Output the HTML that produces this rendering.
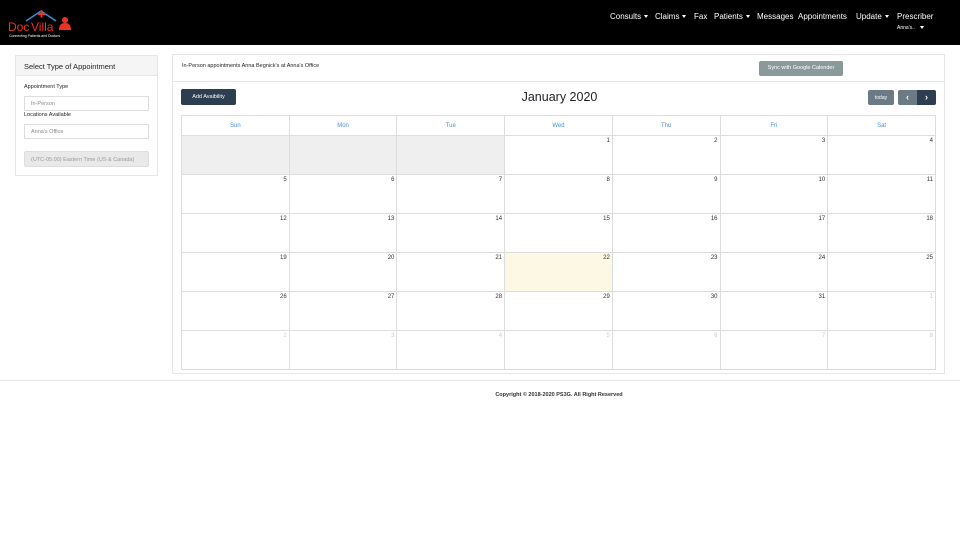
<!DOCTYPE html>
<html><head><meta charset="utf-8"><style>
*{box-sizing:border-box;margin:0;padding:0}
body{width:960px;height:540px;background:#fff;font-family:"Liberation Sans",sans-serif;position:relative;overflow:hidden;color:#212529}
.nav{position:absolute;left:0;top:0;width:960px;height:45px;background:#000}
.nav span{position:absolute;top:12px;color:#fff;font-size:8px}
.car{display:inline-block;border-left:2.5px solid transparent;border-right:2.5px solid transparent;border-top:3px solid #fff;vertical-align:middle;margin-left:3px}
.abs{position:absolute}
.btn{position:absolute;text-align:center;color:#fff;line-height:1}
.card{position:absolute;border:1px solid #e6e6e6;background:#fff}
table{position:absolute;left:181px;top:115px;width:755px;border-collapse:collapse;table-layout:fixed}
td,th{border:1px solid #ddd;font-size:6px;text-align:right;vertical-align:top;padding:2px 2px;height:39px;color:#333;font-weight:normal}
th{height:20px;text-align:center;vertical-align:middle;color:#4a90d9;padding:0}
td.g{background:#efefef}
td.t{background:#fcf8e3}
td.o{color:#ccc}
</style></head><body>
<div class="nav">
 <svg class="abs" style="left:8px;top:7px" width="65" height="32" viewBox="0 0 65 32">
  <path d="M18 14 L33 4 L48 14" fill="none" stroke="#3a8fd6" stroke-width="1.5"/>
  <rect x="30" y="6" width="7" height="2" fill="#e32"/><rect x="32.5" y="3.5" width="2" height="7" fill="#e32"/>
  <circle cx="57" cy="13" r="3" fill="#e32"/><path d="M51 23 Q51 16 57 16 Q63 16 63 23Z" fill="#e32"/>
  <text x="0" y="24" font-family="Liberation Sans" font-size="12" fill="#e32">Doc</text>
  <text x="23" y="24" font-family="Liberation Sans" font-size="12" fill="#e32">Villa</text>
  <text x="1" y="30" font-family="Liberation Sans" font-size="3.5" fill="#fff">Connecting Patients and Doctors</text>
 </svg>
 <span style="left:610px">Consults<i class="car"></i></span>
 <span style="left:655px">Claims<i class="car"></i></span>
 <span style="left:694px">Fax</span>
 <span style="left:714px">Patients<i class="car"></i></span>
 <span style="left:757px">Messages</span>
 <span style="left:798px">Appointments</span>
 <span style="left:856px">Update<i class="car"></i></span>
 <span style="left:897px">Prescriber</span>
 <span style="left:897px;top:25px;font-size:5px">Anna's.. <i class="car" style="margin-left:4px"></i></span>
</div>

<div class="card" style="left:15px;top:55px;width:143px;height:121px">
 <div style="height:20px;background:#f5f5f5;border-bottom:1px solid #e6e6e6;font-size:7.5px;padding:6px 8px">Select Type of Appointment</div>
 <div class="abs" style="left:8px;top:28px;font-size:5.5px">Appointment Type</div>
 <div class="abs" style="left:8px;top:40px;width:125px;height:15px;border:1px solid #ddd;font-size:5.5px;color:#888;padding:4px 6px">In-Person</div>
 <div class="abs" style="left:8px;top:56px;font-size:5.5px">Locations Available</div>
 <div class="abs" style="left:8px;top:68px;width:125px;height:15px;border:1px solid #ddd;font-size:5.5px;color:#888;padding:4px 6px">Anna's Office</div>
 <div class="abs" style="left:8px;top:95px;width:125px;height:16px;border:1px solid #ddd;background:#e9e9e9;border-radius:2px;font-size:5.5px;color:#999;padding:5px 6px">(UTC-05:00) Eastern Time (US &amp; Canada)</div>
</div>

<div class="card" style="left:172px;top:54px;width:773px;height:320px">
 <div style="height:27px;border-bottom:1px solid #e6e6e6;font-size:5.5px;padding:8px 9px">In-Person appointments Anna Begnick's at Anna's Office</div>
 <div class="btn" style="left:586px;top:6px;width:84px;height:15px;padding-top:5px;background:#8a9a9a;border-radius:2px;font-size:5.5px">Sync with Google Calender</div>
 <div class="btn" style="left:8px;top:34px;width:55px;height:16px;padding-top:5.5px;background:#2c3e50;border-radius:2px;font-size:5.5px">Add Avaibility</div>
 <div class="abs" style="left:0;width:773px;top:35px;text-align:center;font-size:12.5px">January 2020</div>
 <div class="btn" style="left:695px;top:35px;width:26px;height:15px;padding-top:5.5px;background:#6c7a86;border-radius:2px;font-size:5px">today</div>
 <div class="btn" style="left:725px;top:35px;width:19px;height:15px;padding-top:3px;background:#6c7a86;border-radius:2px 0 0 2px;font-size:9px;font-weight:bold">‹</div>
 <div class="btn" style="left:744px;top:35px;width:19px;height:15px;padding-top:3px;background:#2c3e50;border-radius:0 2px 2px 0;font-size:9px;font-weight:bold">›</div>
</div>

<table>
<tr><th>Sun</th><th>Mon</th><th>Tue</th><th>Wed</th><th>Thu</th><th>Fri</th><th>Sat</th></tr>
<tr><td class="g"></td><td class="g"></td><td class="g"></td><td>1</td><td>2</td><td>3</td><td>4</td></tr>
<tr><td>5</td><td>6</td><td>7</td><td>8</td><td>9</td><td>10</td><td>11</td></tr>
<tr><td>12</td><td>13</td><td>14</td><td>15</td><td>16</td><td>17</td><td>18</td></tr>
<tr><td>19</td><td>20</td><td>21</td><td class="t">22</td><td>23</td><td>24</td><td>25</td></tr>
<tr><td>26</td><td>27</td><td>28</td><td>29</td><td>30</td><td>31</td><td class="o">1</td></tr>
<tr><td class="o">2</td><td class="o">3</td><td class="o">4</td><td class="o">5</td><td class="o">6</td><td class="o">7</td><td class="o">8</td></tr>
</table>

<div class="abs" style="left:0;top:380px;width:960px;border-top:1px solid #e6e6e6"></div>
<div class="abs" style="left:0;top:392px;width:1118px;text-align:center;font-size:5.5px;font-weight:bold;color:#333">Copyright © 2018-2020 PS3G. All Right Reserved</div>
</body></html>
